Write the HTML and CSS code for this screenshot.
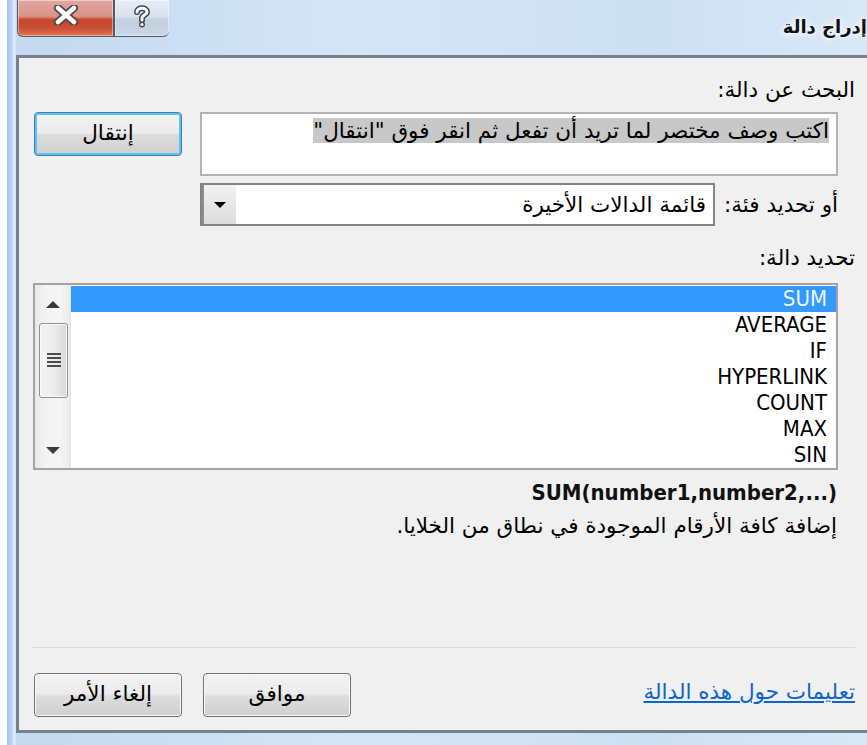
FILE: index.html
```html
<!DOCTYPE html>
<html lang="ar">
<head>
<meta charset="utf-8">
<title>إدراج دالة</title>
<link rel="stylesheet" href="styles.css">
</head>
<body>
<div class="window" dir="rtl">
  <div class="titlebar">
    <div class="title">إدراج دالة</div>
    <div class="caption-buttons">
      <div class="cap-btn help">
        <svg width="20" height="24" viewBox="0 0 20 24">
          <path d="M5 8 C5 3 15 3 15 8 C15 11 10 11 10 14 L10 16" fill="none" stroke="#3f4a55" stroke-width="6" stroke-linecap="round"/>
          <circle cx="10" cy="20.5" r="3" fill="#3f4a55"/>
          <path d="M5 8 C5 3 15 3 15 8 C15 11 10 11 10 14 L10 16" fill="none" stroke="#ffffff" stroke-width="3" stroke-linecap="round"/>
          <circle cx="10" cy="20.5" r="1.6" fill="#ffffff"/>
        </svg>
      </div>
      <div class="cap-btn close">
        <svg width="28" height="20" viewBox="0 0 28 20">
          <path d="M6 3 L22 17 M22 3 L6 17" stroke="#4a4a4a" stroke-width="8" stroke-linecap="round"/>
          <path d="M6 3 L22 17 M22 3 L6 17" stroke="#ffffff" stroke-width="4.5" stroke-linecap="round"/>
        </svg>
      </div>
    </div>
  </div>

  <div class="client">
    <div class="label">البحث عن دالة:</div>

    <div class="search-row">
      <div class="textbox"><span class="selected-text">اكتب وصف مختصر لما تريد أن تفعل ثم انقر فوق "انتقال"</span></div>
      <button class="btn btn-default">إنتقال</button>
    </div>

    <div class="category-row">
      <div class="inline-label">أو تحديد فئة:</div>
      <div class="combo">
        <div class="combo-value">قائمة الدالات الأخيرة</div>
        <div class="combo-arrow"><span class="tri-down"></span></div>
      </div>
    </div>

    <div class="label label-select">تحديد دالة:</div>

    <div class="listbox">
      <ul class="items" dir="ltr">
        <li class="item selected">SUM</li>
        <li class="item">AVERAGE</li>
        <li class="item">IF</li>
        <li class="item">HYPERLINK</li>
        <li class="item">COUNT</li>
        <li class="item">MAX</li>
        <li class="item">SIN</li>
      </ul>
      <div class="scrollbar">
        <span class="sb-arrow up"></span>
        <div class="thumb"><span class="grip"></span></div>
        <span class="sb-arrow down"></span>
      </div>
    </div>

    <div class="signature" dir="ltr">SUM(number1,number2,...)</div>
    <div class="description">إضافة كافة الأرقام الموجودة في نطاق من الخلايا.</div>

    <div class="separator"></div>

    <div class="footer">
      <a class="help-link" href="#">تعليمات حول هذه الدالة</a>
      <div class="footer-buttons">
        <button class="btn">موافق</button>
        <button class="btn">إلغاء الأمر</button>
      </div>
    </div>
  </div>
</div>
</body>
</html>
```

FILE: styles.css
```css
html, body {
  margin: 0;
  padding: 0;
}

body {
  width: 867px;
  height: 745px;
  overflow: hidden;
  background: #ffffff;
  font-family: "DejaVu Sans", sans-serif;
}

.window {
  margin-left: 7px;
  width: 860px;
  height: 745px;
  display: flex;
  flex-direction: column;
  background:
    linear-gradient(to right, #aac8ea 0, #b9d3ef 5px, #dce9f6 6px, #d6e6f5 9px, transparent 9px),
    linear-gradient(to right, #c3d9ef, #d4e5f6 40%, #cde0f3 75%, #d8e8f7);
}

/* title bar */
.titlebar {
  height: 55px;
  flex: none;
  display: flex;
  justify-content: space-between;
  align-items: flex-start;
  padding-left: 10px;
  padding-right: 0;
}

.title {
  margin-top: 15px;
  font-size: 18px;
  font-weight: bold;
  color: #111;
  line-height: 24px;
  text-shadow: 0 0 8px #ffffff, 0 0 4px #ffffff;
}

.caption-buttons {
  display: flex;
}

.cap-btn {
  height: 37px;
  box-sizing: border-box;
  border: 1px solid #4f5863;
  border-top: none;
  display: flex;
  align-items: center;
  justify-content: center;
  box-shadow: inset 0 0 0 1px rgba(255, 255, 255, 0.45);
}

.cap-btn.close {
  width: 97px;
  border-radius: 0 0 0 6px;
  background: linear-gradient(to bottom, #e0a79e 0%, #d99488 45%, #c4452d 55%, #c94f33 78%, #e07450 100%);
}

.cap-btn.close svg {
  margin-top: -6px;
}

.cap-btn.help {
  width: 55px;
  border-right: none;
  border-radius: 0 0 6px 0;
  background: linear-gradient(to bottom, #e6edf5 0%, #d9e2ec 45%, #c2cfde 55%, #c8d6e5 100%);
}

.cap-btn.help svg {
  margin-top: -4px;
}

/* client area */
.client {
  flex: none;
  height: 672px;
  margin-left: 9px;
  border-top: 3px solid #76818d;
  border-left: 3px solid #76818d;
  border-bottom: 3px solid #76818d;
  background: #f0f0f0;
  padding: 0 12px 0 15px;
  display: flex;
  flex-direction: column;
  font-size: 21.5px;
  color: #000;
}

.label {
  margin-top: 20px;
  line-height: 24px;
  height: 24px;
}

.search-row {
  margin-top: 10px;
  margin-right: 17px;
  display: flex;
  align-items: flex-start;
  gap: 18px;
}

.textbox {
  flex: 1;
  height: 64px;
  box-sizing: border-box;
  background: #fff;
  border: 2px solid #b4b4b4;
  padding: 4px 7px 0 0;
  line-height: 26px;
}

.selected-text {
  background: #c8c8c8;
}

.btn {
  width: 148px;
  height: 44px;
  box-sizing: border-box;
  border: 1px solid #707070;
  border-radius: 4px;
  background: linear-gradient(to bottom, #f3f3f3 0%, #ebebeb 48%, #dddddd 52%, #cfcfcf 100%);
  box-shadow: inset 0 0 0 1px #fbfbfb;
  font-family: "DejaVu Sans", sans-serif;
  font-size: 21.5px;
  line-height: 24px;
  color: #000;
  padding: 0 0 2px;
  flex: none;
}

.btn-default {
  border: 1px solid #3c7fb1;
  box-shadow: inset 0 0 0 2px #5fc3f0;
}

.category-row {
  margin-top: 7px;
  margin-right: 17px;
  display: flex;
  align-items: center;
}

.inline-label {
  flex: 1;
  line-height: 24px;
}

.combo {
  width: 515px;
  height: 43px;
  box-sizing: border-box;
  margin-left: 166px;
  border: 2px solid #838383;
  background: #fff;
  display: flex;
  align-items: stretch;
}

.combo-value {
  flex: 1;
  padding-right: 7px;
  line-height: 39px;
}

.combo-arrow {
  width: 34px;
  box-sizing: border-box;
  border-left: 2px solid #8d8d8d;
  background: linear-gradient(to bottom, #f2f2f2, #dcdcdc);
  display: flex;
  align-items: center;
  justify-content: center;
}

.tri-down {
  width: 0;
  height: 0;
  border-left: 6px solid transparent;
  border-right: 6px solid transparent;
  border-top: 6px solid #000;
}

.label-select {
  margin-top: 20px;
}

/* function list */
.listbox {
  margin-top: 13px;
  margin-right: 17px;
  margin-left: -1px;
  height: 187px;
  box-sizing: border-box;
  border: 2px solid #a3a3a3;
  background: #fff;
  display: flex;
}

.items {
  list-style: none;
  margin: 0;
  padding: 1px 0 0;
  flex: 1;
  font-family: "DejaVu Sans Condensed", "DejaVu Sans", sans-serif;
  font-size: 22px;
}

.item {
  height: 26px;
  line-height: 26px;
  text-align: right;
  padding-right: 9px;
}

.item.selected {
  background: #3399ff;
  color: #eef5ff;
}

.scrollbar {
  width: 35px;
  position: relative;
  background: linear-gradient(to right, #e9e9e9, #f3f3f3 30%, #f5f5f5 70%, #ebebeb);
  border-right: 1px solid #e2e2e2;
}

.sb-arrow {
  position: absolute;
  left: 11px;
  width: 0;
  height: 0;
  border-left: 7px solid transparent;
  border-right: 7px solid transparent;
}

.sb-arrow.up {
  top: 16px;
  border-bottom: 7px solid #3a3a3a;
}

.sb-arrow.down {
  bottom: 14px;
  border-top: 7px solid #3a3a3a;
}

.thumb {
  position: absolute;
  left: 4px;
  top: 38px;
  width: 29px;
  height: 75px;
  box-sizing: border-box;
  border: 1px solid #8e8f8f;
  border-radius: 3px;
  background: linear-gradient(to right, #f4f4f4 0%, #ececec 50%, #d7d7d7 100%);
  box-shadow: inset 0 0 0 1px #fbfbfb;
}

.grip {
  position: absolute;
  left: 7px;
  top: 29px;
  width: 14px;
  height: 15px;
  background: repeating-linear-gradient(to bottom, #4a4a4a 0 2px, transparent 2px 4px);
}

.signature {
  margin-top: 11px;
  margin-right: 18px;
  text-align: right;
  font-family: "DejaVu Sans Condensed", "DejaVu Sans", sans-serif;
  font-weight: bold;
  font-size: 22px;
  line-height: 24px;
  color: #111;
}

.description {
  margin-top: 9px;
  margin-right: 18px;
  line-height: 24px;
}

.separator {
  margin-top: 109px;
  margin-left: -2px;
  height: 1px;
  background: #d3dce4;
}

.footer {
  margin-top: 25px;
  display: flex;
  justify-content: space-between;
  align-items: center;
}

.help-link {
  color: #0a66c8;
  text-decoration: underline;
  line-height: 24px;
  margin-top: -6px;
}

.footer-buttons {
  display: flex;
  gap: 21px;
}
```
